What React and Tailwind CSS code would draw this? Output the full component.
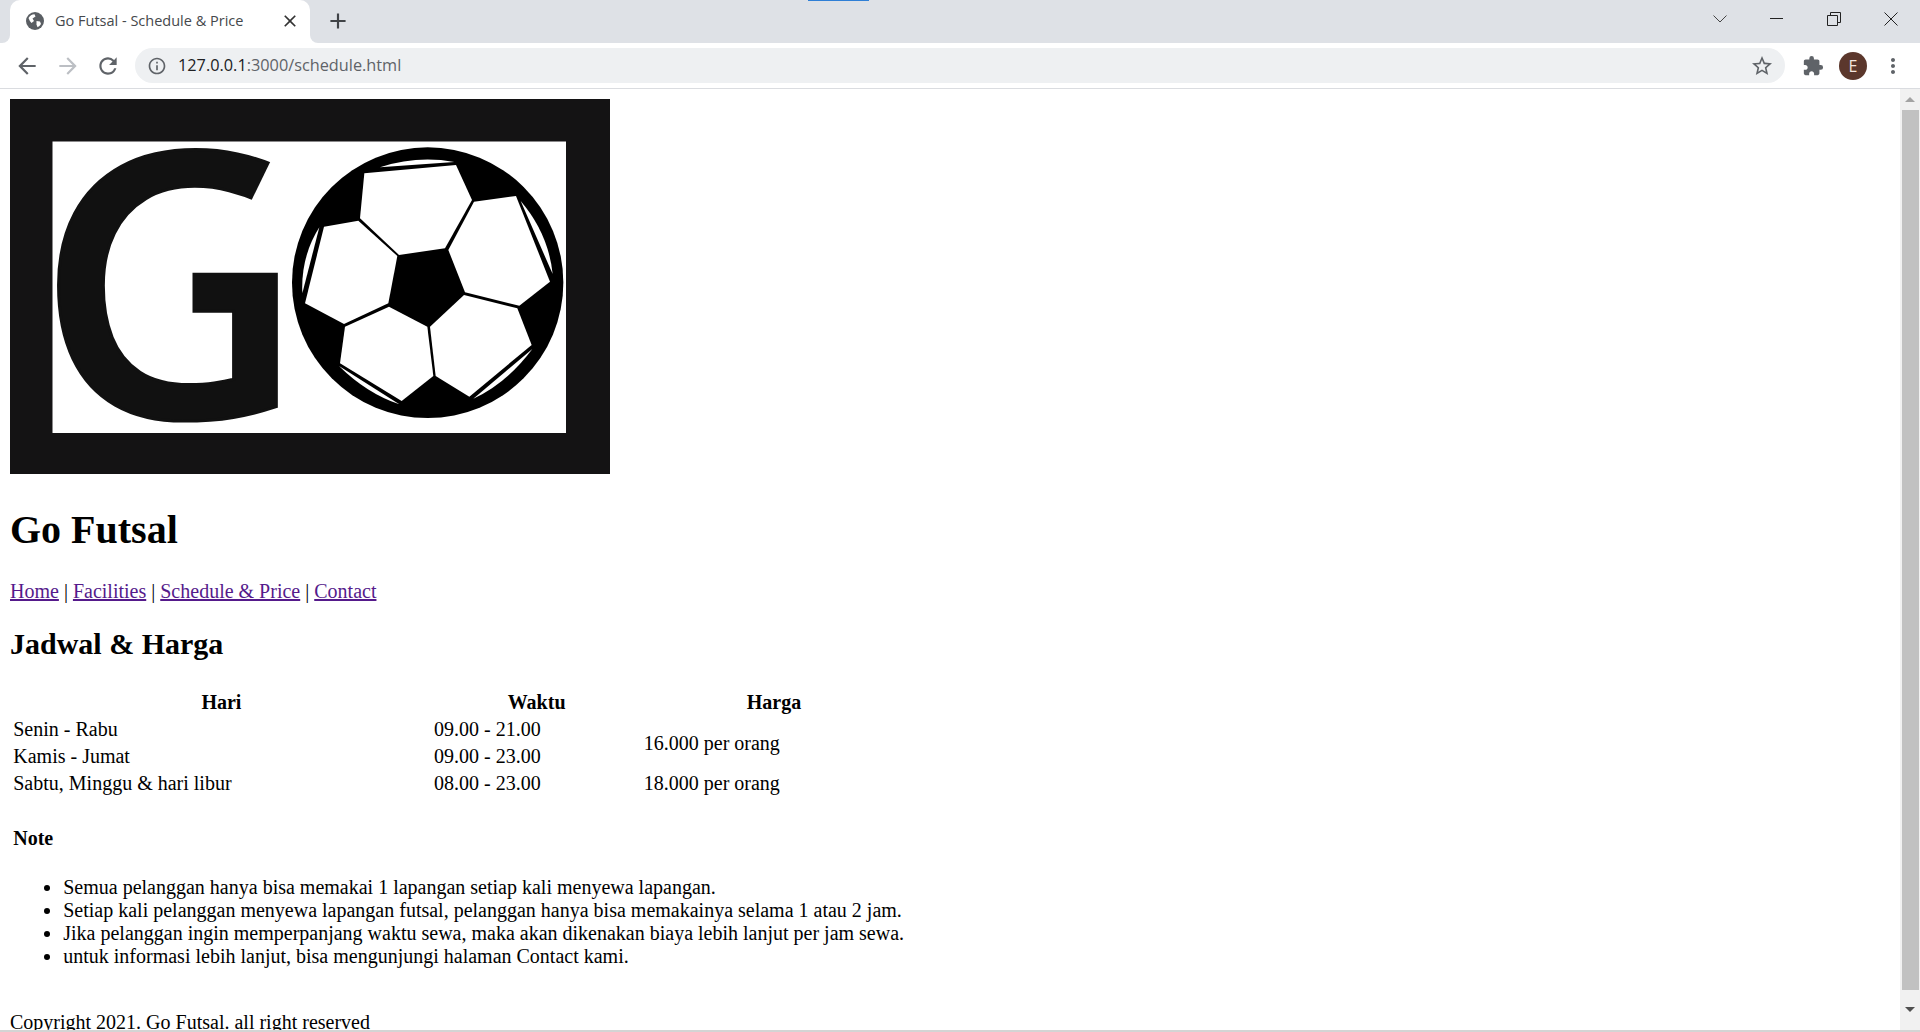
import React from "react";
import { MdArrowBack, MdArrowForward, MdRefresh, MdExtension, MdMoreVert, MdStarBorder, MdInfoOutline, MdClose, MdAdd } from "react-icons/md";

function Ball() {
  const panels = [
    "283,130 558,105 606,210 525,355 387,375 270,265",
    "612,215 738,198 840,455 748,527 585,487 535,360",
    "162,290 265,272 382,378 355,520 222,582 105,520",
    "357,530 472,590 490,738 395,813 210,700 225,590",
    "480,590 582,495 742,535 785,645 598,800 497,738",
  ];
  const slivers = [
    "M330 112 Q440 76 553 96 Z",
    "M752 213 Q835 310 848 432 Z",
    "M148 292 Q92 380 97 490 Z",
    "M207 708 Q290 790 388 823 Z",
    "M787 657 Q710 760 610 806 Z",
  ];
  return (
    <g transform="translate(270 130) scale(0.33333)">
      <ellipse cx="473" cy="458" rx="407" ry="406" fill="#000" />
      {panels.map((p) => <polygon key={p} points={p} fill="#fff" />)}
      {slivers.map((d) => <path key={d} d={d} fill="#fff" />)}
    </g>
  );
}

function Logo() {
  return (
    <svg viewBox="10 99 600 375" className="block w-[600px] h-[375px]">
      <rect x="10" y="99" width="600" height="375" fill="#141314" />
      <rect x="52.5" y="141.5" width="513.5" height="291.5" fill="#fff" />
      <text x="36.5" y="417.5" fontFamily="'Open Sans', sans-serif" fontWeight="600" fontSize="370" fill="#111" stroke="#111" strokeWidth="3">G</text>
      <polygon points="276,150 240,224 290,224 290,150" fill="#fff" />
      <rect x="165" y="268" width="27.5" height="50" fill="#fff" />
      <Ball />
    </svg>
  );
}

function Globe() {
  return (
    <svg viewBox="0 0 18 18" className="w-[18px] h-[18px] shrink-0">
      <circle cx="9" cy="9" r="9" fill="#5a5e63" />
      <path d="M2.5 6 Q4.5 2.2 8.5 2.2 L9.5 4.5 L6.5 6.5 L8 9 L5.5 11 Q3.5 9 2.5 6 Z" fill="#fff" />
      <path d="M10.5 9 L14 9.5 L15 12 Q13.5 14.5 11.5 15.2 L10.5 12.5 Z" fill="#fff" />
    </svg>
  );
}

function Chrome() {
  return (
    <header className="font-['Open_Sans',sans-serif] shrink-0 relative">
      <div className="absolute left-[808px] top-0 w-[61px] h-[1px] bg-[#2f7fd6]" />
      <div className="h-[43px] bg-[#dee1e6] flex items-start">
        <div className="relative ml-[10px] w-[300px] h-[43px] bg-white rounded-t-[10px] flex items-center pb-[2px] pl-[16px] pr-[10px] text-[#45484c]">
          <span className="absolute -left-[8px] bottom-0 w-[8px] h-[8px] bg-white"><span className="block w-full h-full bg-[#dee1e6] rounded-br-[8px]" /></span>
          <span className="absolute -right-[8px] bottom-0 w-[8px] h-[8px] bg-white"><span className="block w-full h-full bg-[#dee1e6] rounded-bl-[8px]" /></span>
          <Globe />
          <span className="ml-[11px] flex-1 text-[14.5px] whitespace-nowrap">Go Futsal - Schedule &amp; Price</span>
          <MdClose size={20} className="text-[#333] shrink-0" />
        </div>
        <div className="w-[54px] h-[43px] flex items-center justify-center pl-[2px] pb-[1px]">
          <MdAdd size={26} className="text-[#404347]" />
        </div>
        <div className="flex-1" />
        <div className="h-[37px] flex items-center">
          <svg viewBox="0 0 14 8" className="w-[14px] h-[8px]"><path d="M0.5 0.5 L7 7 L13.5 0.5" fill="none" stroke="#444" strokeWidth="1" /></svg>
          <div className="w-[57px] flex justify-center ml-[21px]"><div className="w-[13px] h-[1px] bg-[#222]" /></div>
          <div className="w-[57px] flex justify-center">
            <svg viewBox="0 0 14 14" className="w-[14px] h-[14px]"><path d="M0.5 3.5 H10.5 V13.5 H0.5 Z M3.5 3 V0.5 H13.5 V10.5 H11" fill="none" stroke="#222" strokeWidth="1" /></svg>
          </div>
          <div className="w-[58px] flex justify-center">
            <svg viewBox="0 0 14 14" className="w-[14px] h-[14px]"><path d="M0.5 0.5 L13.5 13.5 M13.5 0.5 L0.5 13.5" stroke="#222" strokeWidth="1" /></svg>
          </div>
        </div>
      </div>
      <div className="h-[46px] bg-white border-b border-[#dadce0] flex items-center">
        <div className="w-[135px] flex items-center shrink-0 pl-[14px]">
          <MdArrowBack size={26} className="text-[#5f6368]" />
          <MdArrowForward size={26} className="text-[#bcbfc4] ml-[15px]" />
          <MdRefresh size={26} className="text-[#5f6368] ml-[14px]" />
        </div>
        <div className="w-[1650px] h-[35px] rounded-full bg-[#eef0f2] flex items-center pl-[12px] pr-[11px]">
          <MdInfoOutline size={20} className="text-[#5f6368] shrink-0" />
          <span className="ml-[11px] flex-1 text-[16.3px] text-[#202124] whitespace-nowrap">127.0.0.1<span className="text-[#5f6368]">:3000/schedule.html</span></span>
          <MdStarBorder size={24} className="text-[#5f6368] shrink-0" />
        </div>
        <MdExtension size={22} className="text-[#5f6368] ml-[17px] shrink-0" />
        <div className="w-[28px] h-[28px] rounded-full bg-[#5b372c] text-[#f5e6df] text-[16px] flex items-center justify-center ml-[15px] shrink-0">E</div>
        <MdMoreVert size={24} className="text-[#5f6368] ml-[14px] shrink-0" />
      </div>
    </header>
  );
}

function Scrollbar() {
  return (
    <aside className="w-[20px] shrink-0 bg-[#f1f1f1] flex flex-col items-center">
      <div className="h-[21px] w-full flex items-center justify-center">
        <span className="w-0 h-0 border-x-[5px] border-x-transparent border-b-[5px] border-b-[#a3a3a3]" />
      </div>
      <div className="w-[17px] h-[880px] bg-[#c1c1c1]" />
      <div className="flex-1 w-full flex items-center justify-center pb-[2px]">
        <span className="w-0 h-0 border-x-[5px] border-x-transparent border-t-[5px] border-t-[#505050]" />
      </div>
    </aside>
  );
}

const cellCls = "p-[1.25px] font-normal text-left align-middle";

export default function App() {
  const items = [
    "Semua pelanggan hanya bisa memakai 1 lapangan setiap kali menyewa lapangan.",
    "Setiap kali pelanggan menyewa lapangan futsal, pelanggan hanya bisa memakainya selama 1 atau 2 jam.",
    "Jika pelanggan ingin memperpanjang waktu sewa, maka akan dikenakan biaya lebih lanjut per jam sewa.",
    "untuk informasi lebih lanjut, bisa mengunjungi halaman Contact kami.",
  ];
  return (
    <div className="w-[1920px] h-[1032px] overflow-hidden flex flex-col bg-white">
      <Chrome />
      <div className="flex-1 min-h-0 flex border-b-[2px] border-[#d4d4d4]">
        <main className="flex-1 overflow-hidden p-[10px] text-black text-[20px] leading-[23px] font-['Liberation_Serif','Times_New_Roman',serif]">
          <Logo />
          <h1 className="mt-[33px] text-[40px] leading-[46px] font-bold">Go Futsal</h1>
          <nav className="mt-[27px]">
            <a href="#" className="underline text-[#551a8b]">Home</a> | <a href="#" className="underline text-[#551a8b]">Facilities</a> | <a href="#" className="underline text-[#551a8b]">Schedule &amp; Price</a> | <a href="#" className="underline text-[#551a8b]">Contact</a>
          </nav>
          <h2 className="mt-[24px] mb-[26.5px] text-[30px] leading-[34px] font-bold">Jadwal &amp; Harga</h2>
          <table className="table-fixed border-separate border-spacing-[2.5px] w-[897.5px]">
            <thead>
              <tr className="leading-[22.5px]">
                <th className="w-[418.75px] p-[1.25px] font-bold text-center">Hari</th>
                <th className="w-[207.75px] p-[1.25px] font-bold text-center">Waktu</th>
                <th className="p-[1.25px] font-bold text-center">Harga</th>
              </tr>
            </thead>
            <tbody>
              <tr className="leading-[22.5px]">
                <td className={cellCls}>Senin - Rabu</td>
                <td className={cellCls}>09.00 - 21.00</td>
                <td rowSpan={2} className={cellCls}>16.000 per orang</td>
              </tr>
              <tr className="leading-[23px]">
                <td className={cellCls}>Kamis - Jumat</td>
                <td className={cellCls}>09.00 - 23.00</td>
              </tr>
              <tr className="leading-[22.5px]">
                <td className={cellCls}>Sabtu, Minggu &amp; hari libur</td>
                <td className={cellCls}>08.00 - 23.00</td>
                <td className={cellCls}>18.000 per orang</td>
              </tr>
              <tr>
                <td colSpan={3} className="p-[1.25px] pt-[29.3px] font-bold">Note</td>
              </tr>
              <tr>
                <td colSpan={3} className="p-[1.25px]">
                  <ul className="list-disc pl-[50px] mt-[21.4px]">
                    {items.map((t) => <li key={t}>{t}</li>)}
                  </ul>
                </td>
              </tr>
            </tbody>
          </table>
          <p className="mt-[39.6px] whitespace-nowrap">Copyright 2021. Go Futsal. all right reserved</p>
        </main>
        <Scrollbar />
      </div>
    </div>
  );
}
